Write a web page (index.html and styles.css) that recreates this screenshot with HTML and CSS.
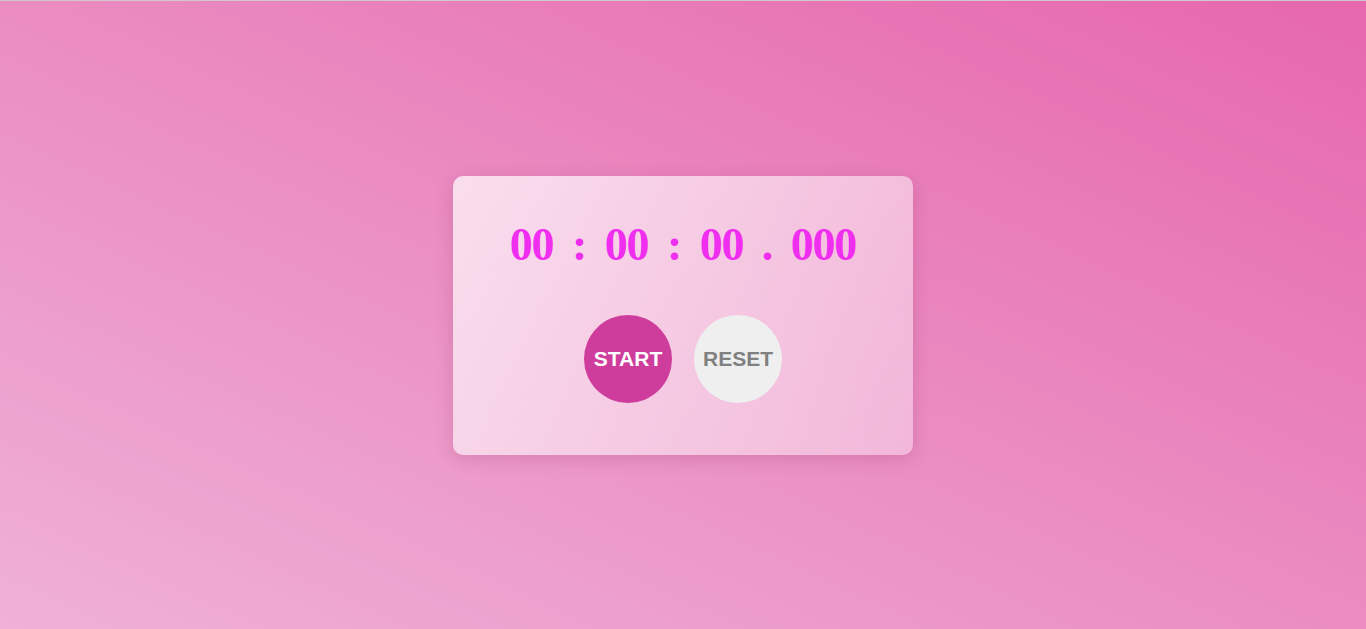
FILE: index.html
```html
<!DOCTYPE html>
<html lang="en">
<head>
<meta charset="utf-8">
<title>Stopwatch</title>
<link rel="stylesheet" href="styles.css">
</head>
<body>
<main class="page">
  <section class="card">
    <div class="time">
      <span class="num">00</span><span class="sep">:</span><span class="num">00</span><span class="sep">:</span><span class="num">00</span><span class="sep">.</span><span class="num">000</span>
    </div>
    <div class="controls">
      <button class="btn btn-start" type="button">START</button>
      <button class="btn btn-reset" type="button">RESET</button>
    </div>
  </section>
</main>
</body>
</html>
```

FILE: styles.css
```css
html, body {
  margin: 0;
  padding: 0;
}

body {
  border-top: 1px solid #cfc9cc;
  background: linear-gradient(to top right, #efb1d7, #e667ad);
  min-height: calc(100vh - 1px);
  font-family: "Liberation Sans", Arial, sans-serif;
}

.page {
  height: calc(100vh - 1px);
  display: flex;
  align-items: center;
  justify-content: center;
}

.card {
  width: 460px;
  height: 279px;
  box-sizing: border-box;
  padding: 44px 0 52px;
  border-radius: 10px;
  background: linear-gradient(135deg, rgba(255, 255, 255, 0.72), rgba(255, 255, 255, 0.36));
  box-shadow: 0 4px 18px rgba(120, 20, 80, 0.18);
  display: flex;
  flex-direction: column;
  align-items: center;
  gap: 45px;
}

.time {
  display: flex;
  justify-content: center;
  font-family: "Liberation Serif", "Times New Roman", serif;
  font-weight: bold;
  font-size: 46px;
  letter-spacing: -1.2px;
  line-height: 50px;
  height: 50px;
  color: #f02ef0;
  white-space: nowrap;
}

.sep {
  margin: 0 18.6px;
}

.controls {
  display: flex;
  gap: 22px;
}

.btn {
  width: 88px;
  height: 88px;
  border: none;
  border-radius: 50%;
  padding: 0;
  display: flex;
  align-items: center;
  justify-content: center;
  font-family: "Liberation Sans", Arial, sans-serif;
  font-weight: bold;
  font-size: 21px;
  cursor: pointer;
}

.btn-start {
  background: #cf3d9c;
  color: #ffffff;
}

.btn-reset {
  background: #efefef;
  color: #808080;
}
```
